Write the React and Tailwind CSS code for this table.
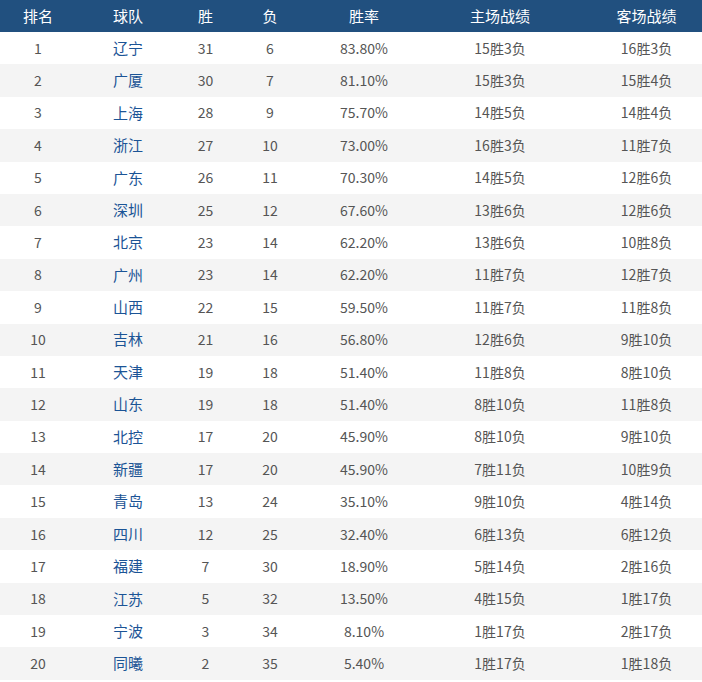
import React from "react";

const rows = [
  [1, "辽宁", 31, 6, "83.80%", "15胜3负", "16胜3负"],
  [2, "广厦", 30, 7, "81.10%", "15胜3负", "15胜4负"],
  [3, "上海", 28, 9, "75.70%", "14胜5负", "14胜4负"],
  [4, "浙江", 27, 10, "73.00%", "16胜3负", "11胜7负"],
  [5, "广东", 26, 11, "70.30%", "14胜5负", "12胜6负"],
  [6, "深圳", 25, 12, "67.60%", "13胜6负", "12胜6负"],
  [7, "北京", 23, 14, "62.20%", "13胜6负", "10胜8负"],
  [8, "广州", 23, 14, "62.20%", "11胜7负", "12胜7负"],
  [9, "山西", 22, 15, "59.50%", "11胜7负", "11胜8负"],
  [10, "吉林", 21, 16, "56.80%", "12胜6负", "9胜10负"],
  [11, "天津", 19, 18, "51.40%", "11胜8负", "8胜10负"],
  [12, "山东", 19, 18, "51.40%", "8胜10负", "11胜8负"],
  [13, "北控", 17, 20, "45.90%", "8胜10负", "9胜10负"],
  [14, "新疆", 17, 20, "45.90%", "7胜11负", "10胜9负"],
  [15, "青岛", 13, 24, "35.10%", "9胜10负", "4胜14负"],
  [16, "四川", 12, 25, "32.40%", "6胜13负", "6胜12负"],
  [17, "福建", 7, 30, "18.90%", "5胜14负", "2胜16负"],
  [18, "江苏", 5, 32, "13.50%", "4胜15负", "1胜17负"],
  [19, "宁波", 3, 34, "8.10%", "1胜17负", "2胜17负"],
  [20, "同曦", 2, 35, "5.40%", "1胜17负", "1胜18负"],
];

const grid = "grid grid-cols-[76px_104px_51px_78px_110px_162px_1fr] items-center";

export default function App() {
  return (
    <div
      className="w-[702px] h-[682px] bg-white overflow-hidden"
      style={{ fontFamily: '"Noto Sans CJK SC", "Noto Sans", sans-serif' }}
    >
      <div className={`${grid} h-[32px] bg-[#21507f] text-white text-[15px] text-center`}>
        <div>排名</div>
        <div>球队</div>
        <div>胜</div>
        <div>负</div>
        <div>胜率</div>
        <div>主场战绩</div>
        <div className="pl-[10px]">客场战绩</div>
      </div>
      {rows.map((r, i) => (
        <div
          key={r[0]}
          className={`${grid} h-[32.4px] text-[14px] text-center text-[#555555] ${
            i % 2 === 1 ? "bg-[#f4f4f4]" : "bg-white"
          }`}
        >
          <div>{r[0]}</div>
          <div className="text-[#1b5496] text-[15px]">{r[1]}</div>
          <div>{r[2]}</div>
          <div>{r[3]}</div>
          <div>{r[4]}</div>
          <div>{r[5]}</div>
          <div className="pl-[10px]">{r[6]}</div>
        </div>
      ))}
    </div>
  );
}
